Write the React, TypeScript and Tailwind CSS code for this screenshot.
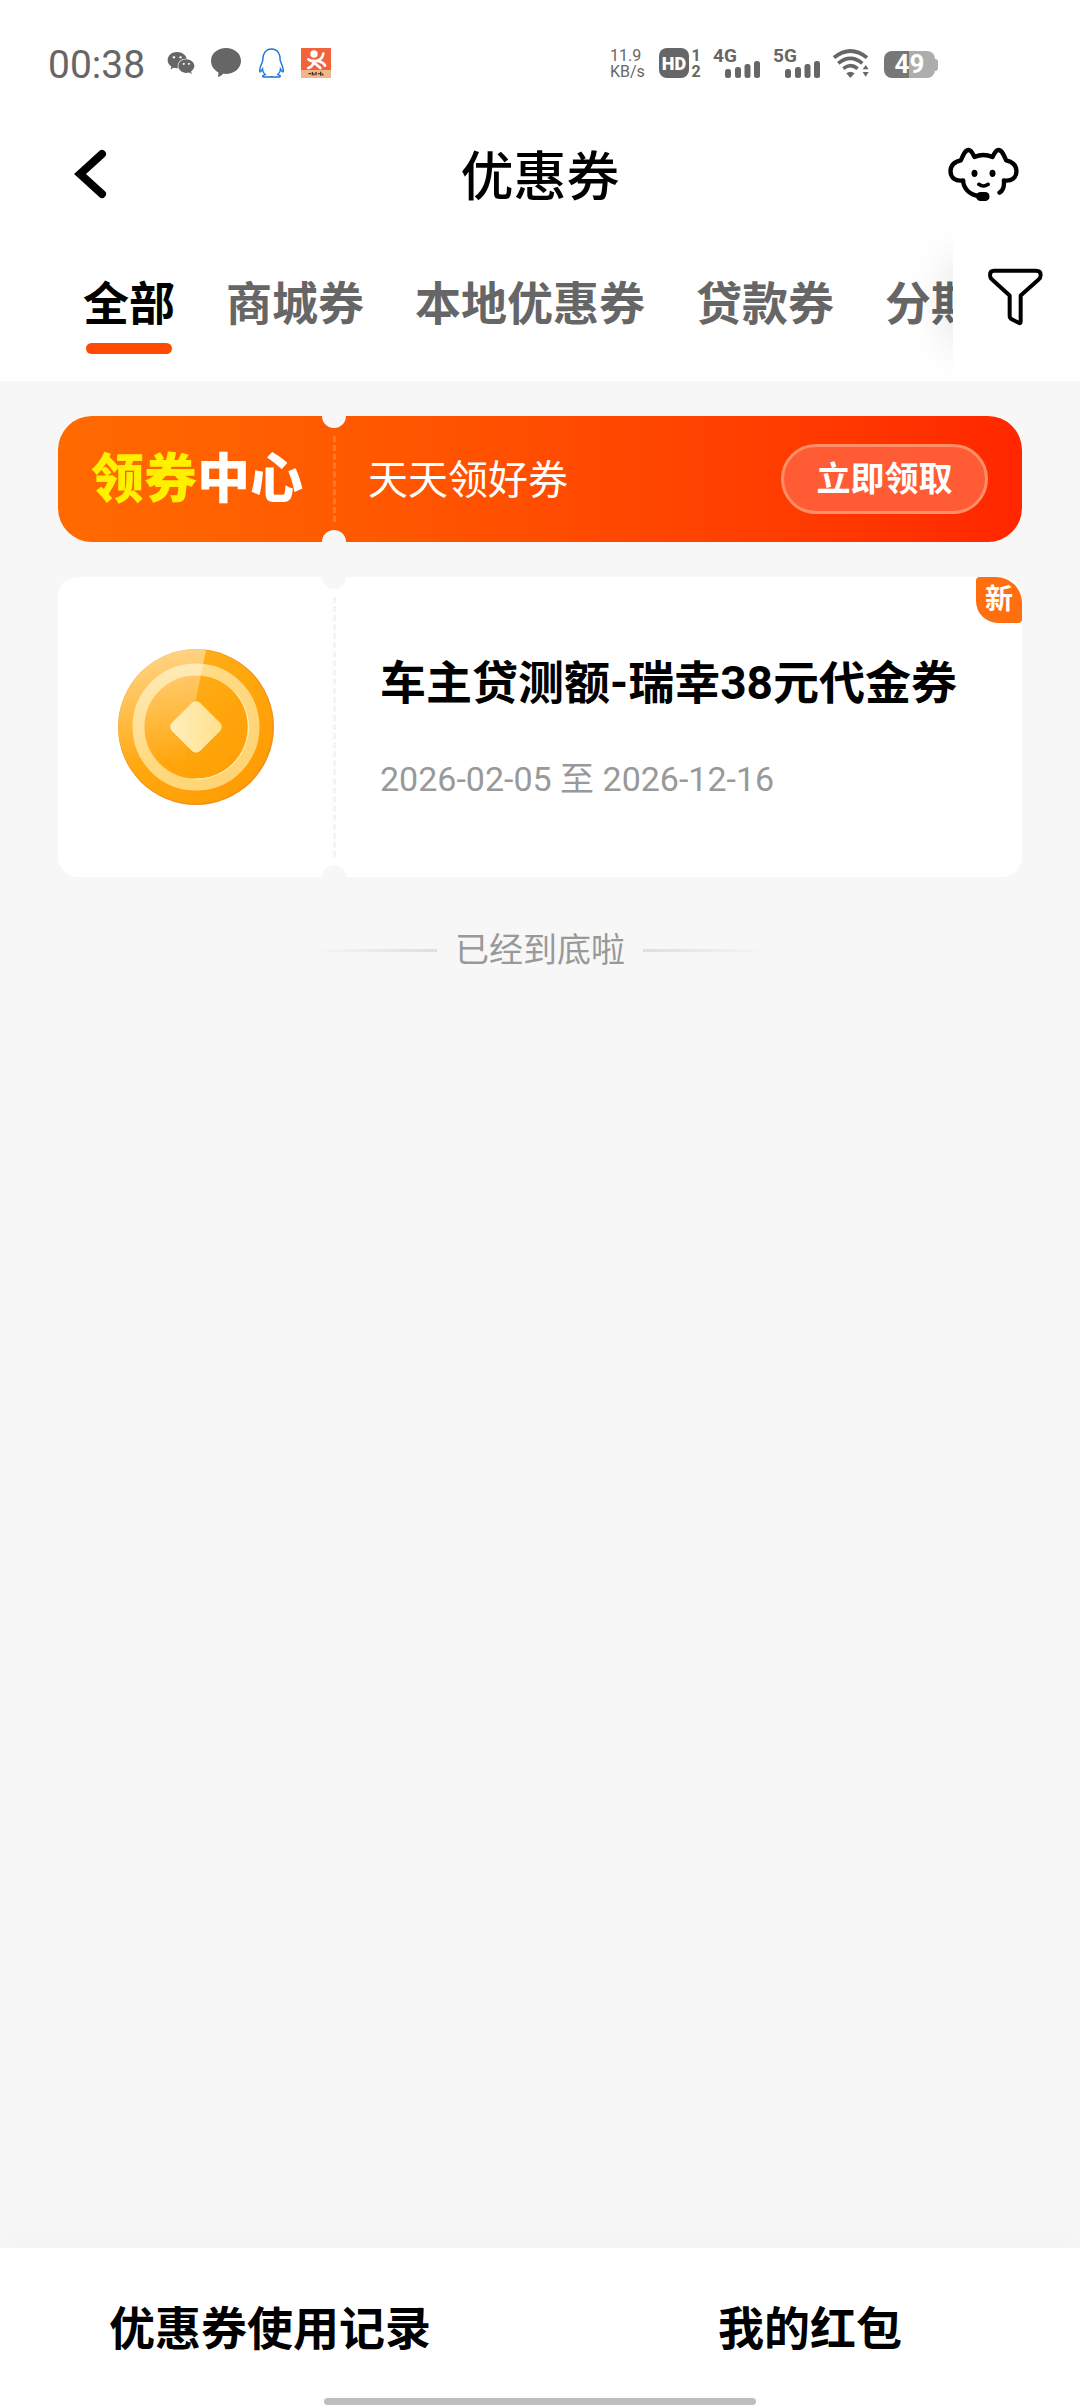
import { FaQq, FaWeixin } from 'react-icons/fa';

const tabs = ['全部', '商城券', '本地优惠券', '贷款券', '分期券'];

function Signal({ label }: { label: string }) {
  return (
    <div className="relative h-[30px] w-12">
      <span className="block text-[19px] leading-[15px] font-bold">{label}</span>
      <svg viewBox="0 0 36 17" className="absolute bottom-0 left-3 h-[17px] w-9" fill="currentColor">
        <rect x="0" y="8" width="6" height="9" rx="2.5" />
        <rect x="10" y="6" width="6" height="11" rx="2.5" />
        <rect x="19.5" y="3" width="6" height="14" rx="2.5" />
        <rect x="29" y="0" width="6" height="17" rx="2.5" />
      </svg>
    </div>
  );
}

function StatusBar() {
  return (
    <div className="flex h-32 items-start justify-between pt-12 pr-[142px] pl-12 font-['Roboto',sans-serif] text-[#666]">
      <div className="flex h-[30px] items-center">
        <span className="w-[116px] pt-1 text-[39px] leading-[30px]">00:38</span>
        <FaWeixin className="mr-4 ml-[3px] h-7 w-7" />
        {/* Message bubble */}
        <svg viewBox="0 0 30 30" className="mr-[18px] h-[30px] w-[30px]" fill="currentColor">
          <path d="M15 0C6.5 0 0 5.5 0 13c0 5 3 9 7.5 11.5L7 29c2-.4 4-1.7 5-3.2 10 1.2 18-5 18-12.800C30 5.500 23.500 0 15 0z" />
        </svg>
        <FaQq className="mr-[17px] h-7 w-[25px] overflow-visible fill-white stroke-[#1f74d8] stroke-[26px]" />
        <svg viewBox="0 0 90 90" className="h-[30px] w-[30px]">
          <rect width="90" height="90" fill="#f2633b" />
          <rect y="66" width="90" height="24" fill="#efb78b" />
          <circle cx="39" cy="18" r="11" fill="#fff" />
          <path d="M22 34c8 6 20 8 30 3 9-4 13-11 15-20M47 38c10 2 20 4 25 15M38 38c0 10-5 18-16 22M38 44c6 4 14 10 20 16" fill="none" stroke="#fff" strokeWidth="8" strokeLinecap="round" />
          <path d="M22 77h8m4-5v10m5-6v6m6-10v10m6-5h5m3-6v12m4-6l4 5" stroke="#4a2d18" strokeWidth="4" />
        </svg>
      </div>

      <div className="flex h-[30px] items-start">
        <div className="w-[49px] text-[16px] leading-[16px]">
          <div>11.9</div>
          <div>KB/s</div>
        </div>
        <div className="flex h-[30px] w-[30px] items-center justify-center rounded-lg bg-[#666] text-[18px] font-black text-white">HD</div>
        <div className="mr-3 ml-0.5 w-[10px] text-center text-[16px] leading-[16px] font-bold">
          <div>1</div>
          <div>2</div>
        </div>
        <Signal label="4G" />
        <div className="w-3" />
        <Signal label="5G" />
        {/* Wifi */}
        <svg viewBox="0 0 108 90" className="ml-3 h-[30px] w-9" fill="none" stroke="currentColor">
          <path d="M3 29Q52-11 102 29M16 46Q52 16 88 46M31 62Q52 44 74 62" strokeWidth="11" />
          <path d="M40 76q12-9 25 0L52 90z" fill="currentColor" stroke="none" />
          <path d="M89 64h18l-9-13zM89 72h18l-9 14z" fill="currentColor" stroke="none" />
        </svg>
        {/* Battery */}
        <div className="mt-[3px] ml-[15px] flex items-center">
          <div className="flex h-[27px] w-[51px] items-center justify-center rounded-lg bg-linear-to-r from-[#777] from-50% to-[#adadad] to-50% text-[26px] font-bold text-white">49</div>
          <div className="h-3 w-[3px] rounded-r-sm bg-[#adadad]" />
        </div>
      </div>
    </div>
  );
}

function ServiceIcon() {
  return (
    <svg viewBox="0 0 224 168" className="h-14 w-[75px]" fill="none" stroke="#000" strokeWidth="13" strokeLinecap="round" strokeLinejoin="round">
      <path d="M98 150C70 146 51 127 51 103C28 107 13 95 13 76C13 56 26 47 44 43C50 30 56 12 67 12C77 12 80 25 85 33Q112 21 139 33C144 25 147 12 157 12C168 12 174 30 180 43C198 47 211 57 211 76C211 95 196 107 173 103C175 120 171 133 160 140" />
      <path d="M98 115q14 10 28 0" strokeWidth="11" />
      <ellipse cx="85" cy="82" rx="9" ry="11" fill="#000" stroke="none" />
      <ellipse cx="139" cy="82" rx="9" ry="11" fill="#000" stroke="none" />
      <rect x="90" y="138" width="40" height="27" rx="13" fill="#000" stroke="none" />
    </svg>
  );
}

function Coin() {
  return (
    <svg viewBox="0 0 156 156" className="h-[156px] w-[156px]">
      <defs>
        <linearGradient id="coin" x1="0" y1="0" x2="1" y2="1">
          <stop offset="0" stopColor="#ffb52e" />
          <stop offset=".5" stopColor="#ffa70d" />
          <stop offset="1" stopColor="#ff9800" />
        </linearGradient>
        <linearGradient id="ring" x1="0" y1="0" x2="1" y2="1">
          <stop offset="0" stopColor="#ffe08f" />
          <stop offset="1" stopColor="#ffd270" />
        </linearGradient>
        <linearGradient id="shine" x1="0" y1="0" x2="0" y2="1">
          <stop offset="0" stopColor="#fff" stopOpacity=".45" />
          <stop offset=".75" stopColor="#fff" stopOpacity="0" />
        </linearGradient>
        <linearGradient id="gem" x1="0" y1="1" x2="1" y2="0">
          <stop offset="0" stopColor="#ffefc0" />
          <stop offset="1" stopColor="#ffe08a" />
        </linearGradient>
      </defs>
      <circle cx="78" cy="78" r="78" fill="#f29018" />
      <circle cx="77.5" cy="77.5" r="77" fill="url(#coin)" />
      <circle cx="78" cy="78" r="57.5" fill="none" stroke="url(#ring)" strokeWidth="12" />
      <path d="M117 43A52 52 0 0 1 77 130" fill="none" stroke="#fff0b8" strokeWidth="1" />
      <path d="M88 1A78 78 0 1 0 60 154L76 60z" fill="url(#shine)" />
      <rect x="58" y="59" width="40" height="40" rx="6" transform="rotate(45 78 79)" fill="#e98a00" opacity=".4" />
      <rect x="58" y="58" width="40" height="40" rx="6" transform="rotate(45 78 78)" fill="url(#gem)" />
    </svg>
  );
}

// Half-circle cutouts and the dashed tear line of a ticket
function TearLine({ className }: { className: string }) {
  return (
    <div className="absolute inset-y-0 left-[264px] flex w-6 flex-col items-center justify-between">
      <div className="h-3 w-6 rounded-b-full bg-[#f7f7f7]" />
      <div className={`my-2 flex-1 border-l-3 border-dashed ${className}`} />
      <div className="h-3 w-6 rounded-t-full bg-[#f7f7f7]" />
    </div>
  );
}

export default function App() {
  return (
    <div className="flex min-h-screen flex-col bg-[#f7f7f7] font-['Roboto','Noto_Sans_CJK_SC',sans-serif] text-black">
      <header className="bg-white">
        <StatusBar />
        <div className="flex h-24 items-center justify-between px-[58px]">
          <button aria-label="返回" className="flex w-[78px] items-center pb-1 pl-[14px]">
            <svg viewBox="0 0 36 52" className="h-[52px] w-9" fill="none" stroke="#000" strokeWidth="8" strokeLinecap="round">
              <path d="M30 6L8 26L30 46" />
            </svg>
          </button>
          <h1 className="pt-1 text-[53px] leading-[60px] font-medium">优惠券</h1>
          <button aria-label="客服" className="flex w-[78px] justify-center pb-1">
            <ServiceIcon />
          </button>
        </div>
        <div className="flex">
          <nav className="relative flex min-w-0 flex-1 gap-[51px] overflow-hidden pt-[52px] pb-[27px] pl-[83px]">
            {tabs.map((tab, i) => (
              <button key={tab} className="flex shrink-0 flex-col items-center gap-[11px]">
                <span className={i === 0 ? 'text-[46px] leading-[56px] font-bold' : 'text-[46px] leading-[56px] font-bold text-[#666]'}>{tab}</span>
                {i === 0 && <span className="h-[11px] w-[86px] rounded-full bg-[#ff4a05]" />}
              </button>
            ))}
            <span className="absolute top-[39px] left-full h-20 w-10 shadow-[0_0_48px_rgba(0,0,0,0.15)]" />
          </nav>
          <button aria-label="筛选" className="flex w-[127px] items-start justify-center pt-[43px] pr-1">
            <svg viewBox="0 0 174 182" className="h-[61px] w-[58px]" fill="none" stroke="#000" strokeWidth="12" strokeLinejoin="round">
              <path d="M24 11H150Q164 11 164 24Q164 32 157 38L104 85V163Q104 170 98 167L77 156Q71 153 71 146V85L19 38Q12 32 12 24Q12 11 24 11z" />
            </svg>
          </button>
        </div>
      </header>

      <main className="flex-1 px-[58px] pt-[35px]">
        <section className="relative flex h-[126px] items-center overflow-hidden rounded-[34px] bg-linear-to-r from-[#ff6a00] via-[#ff4d00] to-[#ff2600] pr-[34px] pl-[33px]">
          <TearLine className="border-[#ff7a26]" />
          <h2 className="w-[277px] pt-1 text-[53px] font-black whitespace-nowrap text-white">
            <span className="text-[#fff000]">领券</span>中心
          </h2>
          <p className="flex-1 pt-1 text-[40px] text-white">天天领好券</p>
          <button className="h-[70px] w-[207px] rounded-full border-3 border-[#ff8f66] bg-[#ff5c36] text-[34px] font-bold text-white">立即领取</button>
        </section>

        <article className="relative mt-[35px] flex h-[300px] overflow-hidden rounded-[20px] bg-white">
          <TearLine className="border-[#f4f4f4]" />
          <div className="flex w-[276px] items-center justify-center">
            <Coin />
          </div>
          <div className="flex-1 pt-[78px] pl-[46px]">
            <h3 className="text-[46px] leading-[56px] font-bold">车主贷测额-瑞幸38元代金券</h3>
            <p className="mt-[38px] text-[34px] leading-[60px] text-[#999]">2026-02-05 至 2026-12-16</p>
          </div>
          <span className="absolute top-0 right-0 flex h-[46px] w-[46px] items-center justify-center rounded-[4px] rounded-tr-[26px] rounded-bl-[22px] bg-[#ff6f0f] text-[28px] font-bold text-white">新</span>
        </article>

        <div className="mt-[46px] flex items-center justify-center gap-[18px]">
          <div className="h-[3px] w-[126px] bg-linear-to-r from-[#f7f7f7] to-[#dedede]" />
          <p className="text-[34px] leading-[54px] text-[#999]">已经到底啦</p>
          <div className="h-[3px] w-[126px] bg-linear-to-r from-[#dedede] to-[#f7f7f7]" />
        </div>
      </main>

      <footer className="bg-white pb-[3px] shadow-[0_0_40px_rgba(0,0,0,0.04)]">
        <div className="grid grid-cols-2">
          <button className="h-[150px] pt-3 text-[46px] font-bold">优惠券使用记录</button>
          <button className="h-[150px] pt-3 text-[46px] font-bold">我的红包</button>
        </div>
        <div className="mx-auto h-[7px] w-2/5 rounded-full bg-[#bebebe]" />
      </footer>
    </div>
  );
}
